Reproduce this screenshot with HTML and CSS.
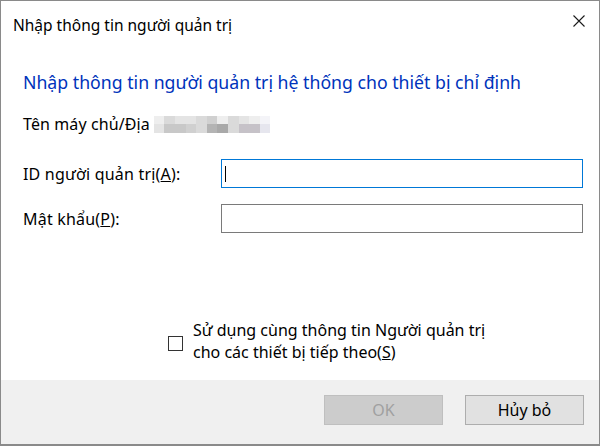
FILE: index.html
```html
<!DOCTYPE html>
<html lang="vi">
<head>
<meta charset="utf-8">
<title>Nhập thông tin người quản trị</title>
<link rel="stylesheet" href="styles.css">
</head>
<body>
<div class="dialog">
  <div class="titlebar">
    <span class="title">Nhập thông tin người quản trị</span>
    <span class="close" aria-label="Đóng">
      <svg width="14" height="14" viewBox="0 0 14 14"><path d="M1.5 1.5 L12.5 12.5 M12.5 1.5 L1.5 12.5" stroke="#1a1a1a" stroke-width="1.1" fill="none"/></svg>
    </span>
  </div>
  <div class="content">
    <h1 class="heading">Nhập thông tin người quản trị hệ thống cho thiết bị chỉ định</h1>
    <div class="host">
      <span>Tên máy chủ/Địa</span>
      <span class="mosaic">
        <i class="m1"></i><i class="m3"></i><i class="m2"></i><i class="m2"></i><i class="m3"></i><i class="m4"></i><i class="m1"></i><i class="m3"></i><i class="m2"></i><i class="m1"></i><i class="m0"></i>
        <i class="m2"></i><i class="m5"></i><i class="m5"></i><i class="m4"></i><i class="m3"></i><i class="m6"></i><i class="m7"></i><i class="m3"></i><i class="m5p"></i><i class="m5p"></i><i class="m1b"></i>
      </span>
    </div>
    <div class="form">
      <label class="label">ID người quản trị(<u>A</u>):</label>
      <div class="field focused"><span class="caret"></span></div>
      <label class="label">Mật khẩu(<u>P</u>):</label>
      <div class="field"></div>
    </div>
    <div class="check">
      <span class="box"></span>
      <span class="check-text">Sử dụng cùng thông tin Người quản trị<br>cho các thiết bị tiếp theo(<u>S</u>)</span>
    </div>
  </div>
  <div class="footer">
    <button class="btn disabled" disabled>OK</button>
    <button class="btn">Hủy bỏ</button>
  </div>
</div>
</body>
</html>
```

FILE: styles.css
```css
* { box-sizing: border-box; }
html, body { margin: 0; padding: 0; background: #ffffff; }
body { font-family: "Noto Sans", "Open Sans", sans-serif; color: #000; }

.dialog {
  width: 600px;
  height: 446px;
  border: 1px solid #8a8a8a;
  border-bottom-width: 2px;
  background: #ffffff;
  display: flex;
  flex-direction: column;
}

.titlebar {
  height: 40px;
  display: flex;
  align-items: center;
  justify-content: space-between;
  padding: 0 13px 0 12px;
  flex: none;
}
.title { font-size: 15.5px; line-height: 20px; padding-top: 8px; }
.close { display: flex; width: 14px; height: 14px; }

.content {
  flex: 1;
  display: flex;
  flex-direction: column;
  padding: 30px 15px 17px 22px;
}

.heading {
  margin: 0;
  font-size: 17.7px;
  font-weight: normal;
  line-height: 22px;
  color: #0033bb;
}

.host {
  margin-top: 21px;
  display: flex;
  align-items: center;
  font-size: 16px;
  line-height: 20px;
  gap: 4px;
  letter-spacing: 0.1px;
}

.mosaic {
  display: grid;
  grid-template-columns: repeat(11, 10.6px);
  grid-template-rows: 8px 9px;
  margin-top: 1px;
}
.mosaic i { display: block; }
.m0 { background: #f4f4f8; }
.m1 { background: #eeeeee; }
.m1b { background: #e6e6ee; }
.m2 { background: #e4e4e4; }
.m3 { background: #dadada; }
.m4 { background: #d0d0d0; }
.m5 { background: #c8c8c8; }
.m5p { background: #c6c2c8; }
.m6 { background: #b4b4b4; }
.m7 { background: #a9a9a9; }

.form {
  margin-top: 25px;
  display: grid;
  grid-template-columns: 198px 362px;
  row-gap: 16px;
  align-items: center;
}
.label { font-size: 16px; line-height: 20px; letter-spacing: 0.2px; }
.field {
  height: 29px;
  border: 1px solid #7a7a7a;
  background: #fff;
  display: flex;
  align-items: center;
  padding-left: 3px;
}
.field.focused { border-color: #0078d7; }
.caret { width: 1px; height: 16px; background: #000; }

.check {
  margin-top: auto;
  margin-left: 145px;
  display: flex;
  align-items: center;
  gap: 10px;
}
.box {
  width: 15px;
  height: 15px;
  border: 1px solid #333333;
  background: #fff;
  margin-top: 4px;
  flex: none;
}
.check-text { font-size: 16px; line-height: 22px; }

.footer {
  height: 64px;
  flex: none;
  background: #f0f0f0;
  display: flex;
  justify-content: flex-end;
  align-items: center;
  gap: 22px;
  padding: 0 15px 0 0;
}
.btn {
  width: 119px;
  height: 30px;
  font-family: inherit;
  font-size: 16px;
  background: #e1e1e1;
  border: 1px solid #adadad;
  color: #000;
  padding: 0;
  margin-bottom: 4px;
}
.btn.disabled {
  background: #cccccc;
  border-color: #bfbfbf;
  color: #a0a0a0;
}
```
